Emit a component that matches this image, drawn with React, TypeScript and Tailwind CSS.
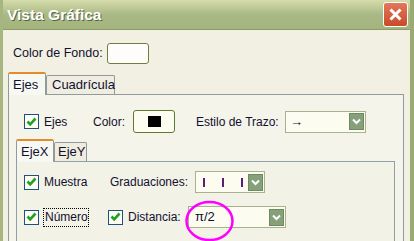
import * as React from "react";

const font = { fontFamily: '"Liberation Sans", Arial, sans-serif' };

function Check() {
  return (
    <div className="w-[15px] h-[15px] border border-[#1c5180] bg-[#fdfdf6] flex items-center justify-center shrink-0">
      <svg width="11" height="10" viewBox="0 0 11 10">
        <path d="M1.5 4.5 L4.2 7.3 L9.5 1.5" fill="none" stroke="#21a121" strokeWidth="2.6" />
      </svg>
    </div>
  );
}

function Arrow() {
  return (
    <div className="w-[15px] h-[17px] bg-[#86a07a] border border-[#6d8a60] flex items-center justify-center">
      <svg width="9" height="7" viewBox="0 0 9 7">
        <path d="M1 1.5 L4.5 5 L8 1.5" fill="none" stroke="#ffffff" strokeWidth="2" />
      </svg>
    </div>
  );
}

function Select({ className, children }: { className: string; children?: React.ReactNode }) {
  return (
    <div className={`h-[22px] border border-[#a9b28c] bg-[#fcfcf0] flex items-center pl-[4px] pr-[1px] ${className}`}>
      <div className="flex-1 flex items-center">{children}</div>
      <Arrow />
    </div>
  );
}

export default function App() {
  return (
    <div className="w-[414px] h-[241px] overflow-hidden relative bg-[#f2f0e2] text-[12px] text-[#111030]" style={font}>
      <div className="h-full flex flex-col border-l-[3px] border-[#a7b581] border-r-[4px] border-r-[#9aab72]">
        {/* title bar */}
        <div className="h-[30px] shrink-0 flex items-center justify-between pl-[4px] pr-[2px] bg-gradient-to-b from-[#d6dcab] via-[#a9b985] to-[#a3b47e] border-b border-[#8c9c64]">
          <span className="text-white font-bold text-[15.5px] [text-shadow:1px_1px_0_#5a6440]">Vista Gráfica</span>
          <div className="w-[25px] h-[25px] rounded-[3px] border border-white bg-gradient-to-b from-[#e4775a] to-[#c84a2a] flex items-center justify-center">
            <svg width="15" height="15" viewBox="0 0 15 15">
              <path d="M2.5 2.5 L12.5 12.5 M12.5 2.5 L2.5 12.5" stroke="#ffffff" strokeWidth="3" />
            </svg>
          </div>
        </div>

        {/* background colour row */}
        <div className="flex items-center mt-[12px] ml-[10px] h-[22px]">
          <span className="w-[94px] text-[12.5px]">Color de Fondo:</span>
          <div className="w-[42px] h-[21px] rounded-[3px] border border-[#6f7f40] bg-[#fefdfa]" />
        </div>

        {/* outer tabs */}
        <div className="flex items-end ml-[5px] mt-[8px] h-[22px]">
          <div className="w-[38px] h-[23px] border-x border-[#919b9c] border-t-[2px] border-t-[#e68b2c] rounded-t-[2px] bg-[#f8f8f2] flex items-center pl-[4px] text-[13px] relative z-10 -mb-[1px]">Ejes</div>
          <div className="w-[69px] h-[19px] border border-[#919b9c] border-b-0 rounded-t-[2px] bg-[#efede0] flex items-center pl-[5px] text-[13px]">Cuadrícula</div>
        </div>
        <div className="flex-1 ml-[5px] mr-[6px] border border-[#919b9c] border-b-0 bg-[#f5f4ea] flex flex-col">
          <div className="flex items-center h-[23px] mt-[15px] pl-[15px]">
            <Check />
            <span className="ml-[5px] w-[49px]">Ejes</span>
            <span className="w-[40px]">Color:</span>
            <div className="w-[42px] h-[23px] rounded-[3px] border border-[#5f7a30] bg-[#fdfcf0] flex items-center justify-center">
              <div className="w-[13px] h-[11px] bg-black" />
            </div>
            <span className="ml-[21px] w-[89px]">Estilo de Trazo:</span>
            <Select className="w-[81px]">
              <span className="text-[13px] leading-none">→</span>
            </Select>
          </div>

          {/* inner tabs */}
          <div className="flex items-end ml-[7px] mt-[6px] h-[22px]">
            <div className="w-[38px] h-[23px] border-x border-[#919b9c] border-t-[2px] border-t-[#e68b2c] rounded-t-[2px] bg-[#f8f8f2] flex items-center pl-[4px] text-[13px] relative z-10 -mb-[1px]">EjeX</div>
            <div className="w-[33px] h-[19px] border border-[#919b9c] border-b-0 rounded-t-[2px] bg-[#efede0] flex items-center pl-[3px] text-[13px]">EjeY</div>
          </div>
          <div className="flex-1 ml-[7px] mr-[8px] border border-[#8fa0a8] border-b-0 bg-[#f3f2e6] flex flex-col">
            <div className="flex items-center h-[22px] mt-[9px] pl-[7px]">
              <Check />
              <span className="ml-[5px] w-[66px]">Muestra</span>
              <span className="w-[85px]">Graduaciones:</span>
              <Select className="w-[70px]">
                <div className="flex items-center gap-[17px] pl-[3px]">
                  <div className="w-[2px] h-[9px] bg-[#5a1f78]" />
                  <div className="w-[2px] h-[9px] bg-[#5a1f78]" />
                  <div className="w-[2px] h-[9px] bg-[#5a1f78]" />
                </div>
              </Select>
            </div>
            <div className="flex items-center h-[22px] mt-[13px] pl-[7px]">
              <Check />
              <span className="ml-[4px] w-[46px] h-[19px] border border-dotted border-black flex items-center pl-[1px]">Número</span>
              <div className="ml-[19px]">
                <Check />
              </div>
              <span className="ml-[5px] w-[60px]">Distancia:</span>
              <Select className="w-[98px]">
                <span className="text-[13px] pl-[2px]">π/2</span>
              </Select>
            </div>
          </div>
        </div>
      </div>
      <svg className="absolute left-0 top-0 pointer-events-none" width="414" height="241">
        <ellipse cx="209.5" cy="221" rx="23" ry="19" fill="none" stroke="#ff00ff" strokeWidth="2.5" />
      </svg>
    </div>
  );
}
